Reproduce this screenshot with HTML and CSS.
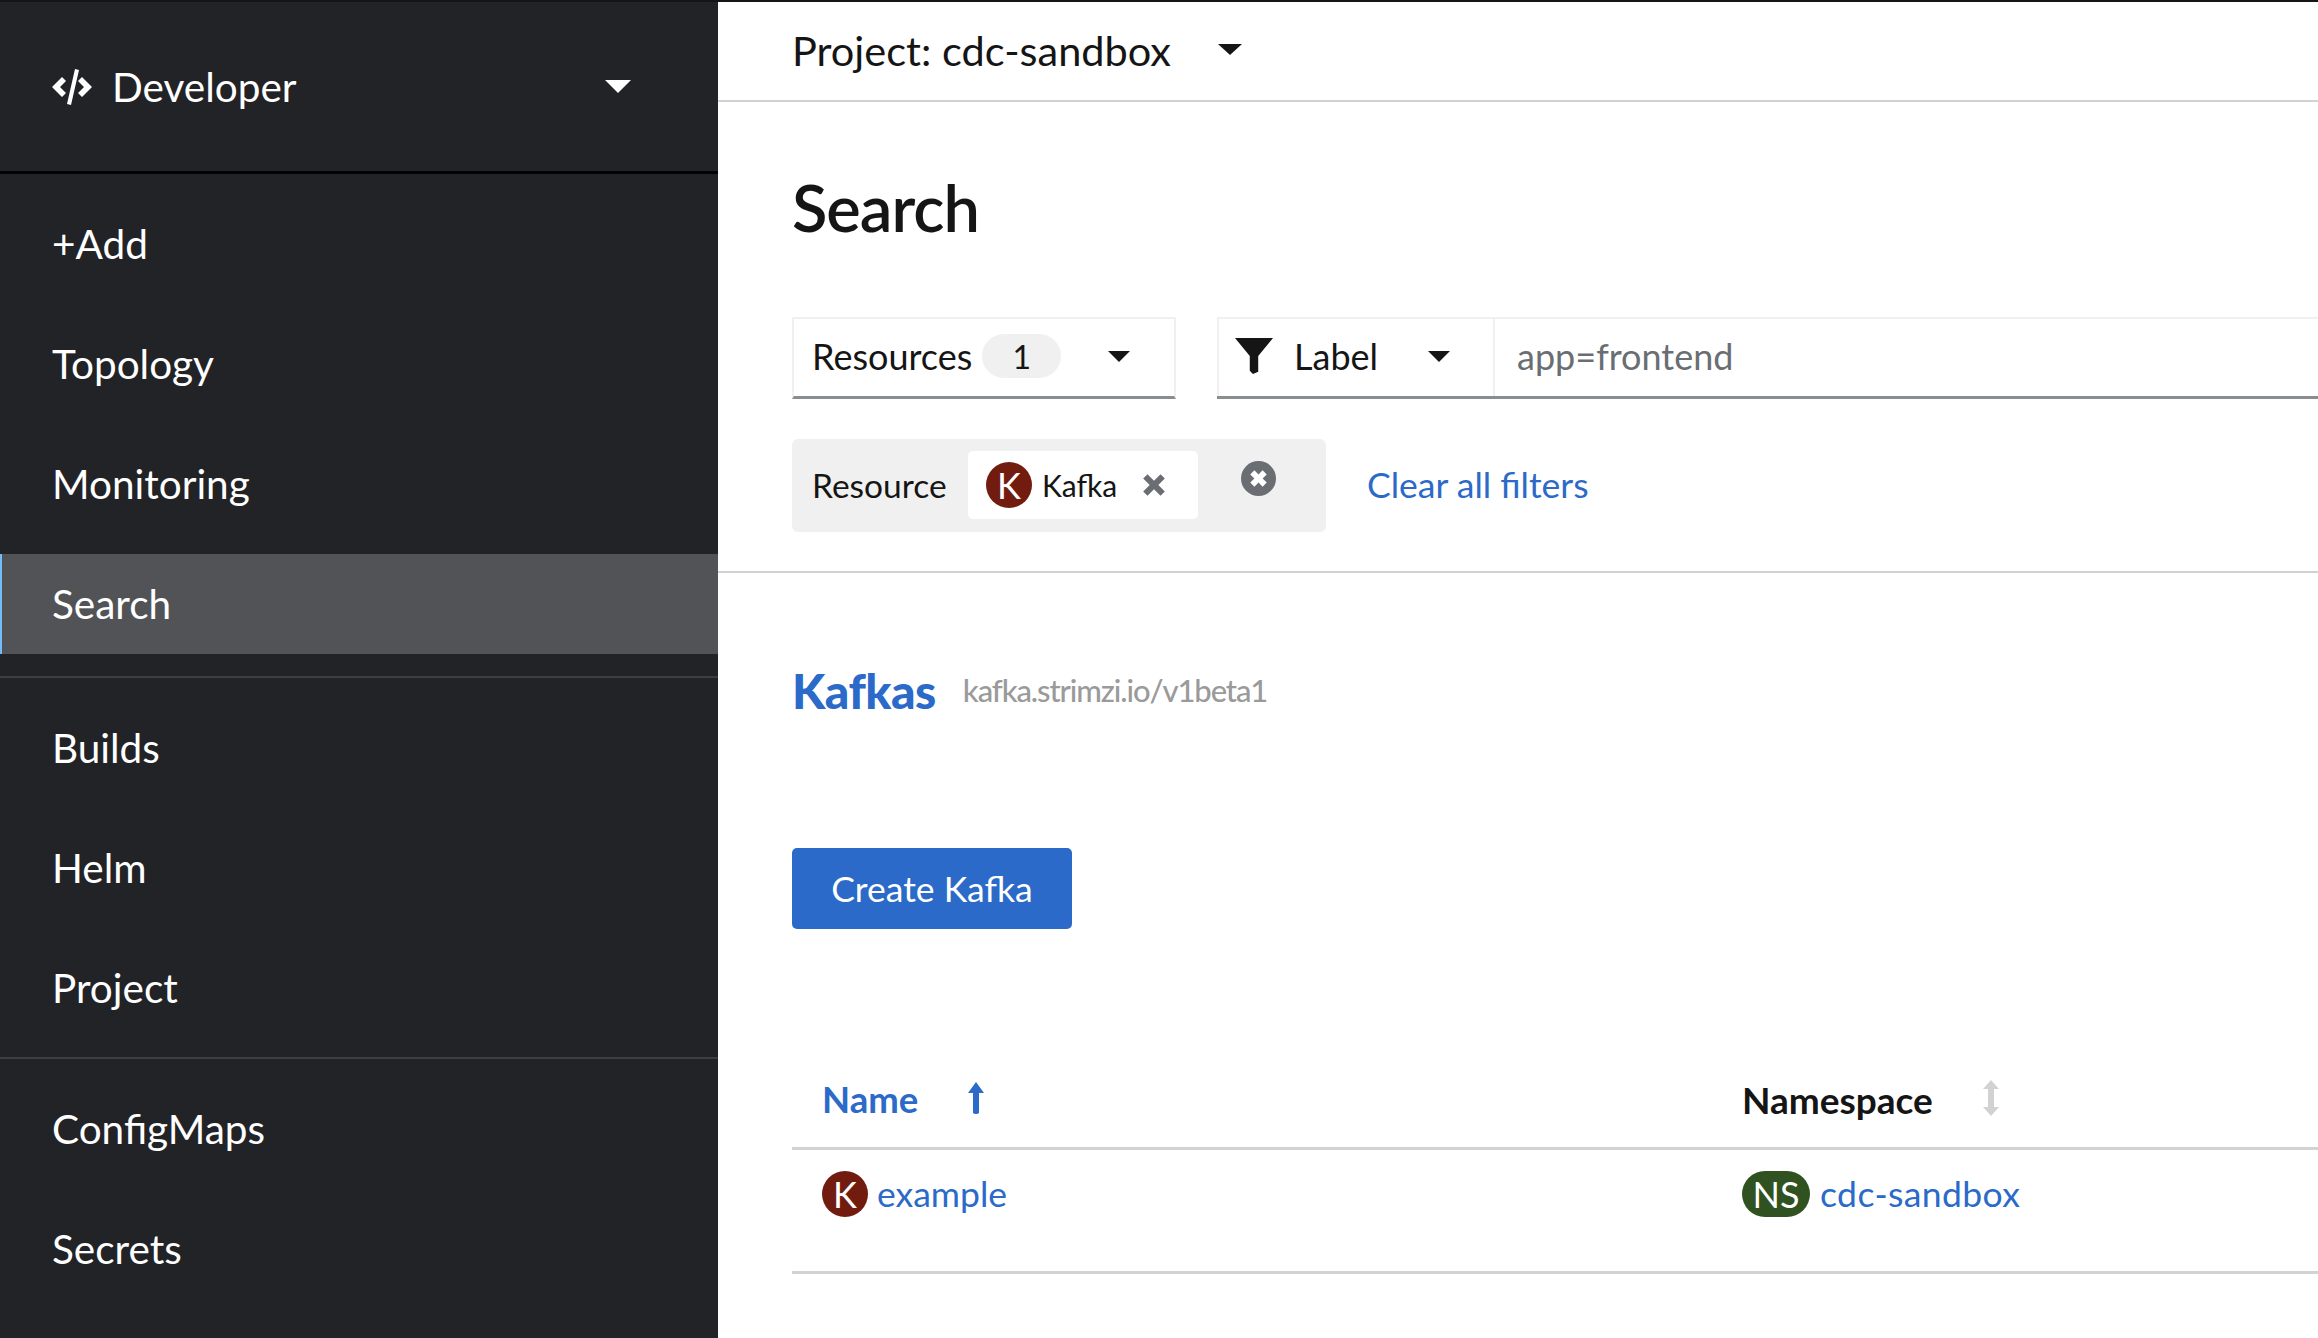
FILE: index.html
```html
<!DOCTYPE html>
<html lang="en">
<head>
<meta charset="utf-8">
<title>Search</title>
<link rel="stylesheet" href="styles.css">
</head>
<body>
<div class="app">
  <aside class="sidebar">
    <div class="perspective">
      <svg class="code-icon" viewBox="0 0 40 36" aria-hidden="true"><path d="M10 8 0 18l10 10 4-4-6-6 6-6zM30 8l10 10-10 10-4-4 6-6-6-6zM23 0l-8 35 4 1 8-35z" fill="#fff"/></svg>
      <span class="perspective-name">Developer</span>
      <span class="caret caret-light"></span>
    </div>
    <nav class="nav">
      <div class="nav-group">
        <a class="nav-item">+Add</a>
        <a class="nav-item">Topology</a>
        <a class="nav-item">Monitoring</a>
        <a class="nav-item active">Search</a>
      </div>
      <div class="nav-group">
        <a class="nav-item">Builds</a>
        <a class="nav-item">Helm</a>
        <a class="nav-item">Project</a>
      </div>
      <div class="nav-group">
        <a class="nav-item">ConfigMaps</a>
        <a class="nav-item">Secrets</a>
      </div>
    </nav>
  </aside>
  <main class="main">
    <div class="project-bar">
      <span>Project: cdc-sandbox</span>
      <span class="caret caret-dark"></span>
    </div>
    <section class="search-head">
      <h1 class="title">Search</h1>
      <div class="toolbar">
        <div class="select resources">
          <span>Resources</span>
          <span class="count">1</span>
          <span class="caret caret-small"></span>
        </div>
        <div class="filter">
          <div class="select label">
            <svg class="funnel" viewBox="0 0 36 34" aria-hidden="true"><path d="M0 0h36L22 17v15l-5 2-3-3V17z" fill="#151515"/></svg>
            <span>Label</span>
            <span class="caret caret-small"></span>
          </div>
          <div class="filter-input">app=frontend</div>
        </div>
      </div>
      <div class="chips-row">
        <div class="chip-group">
          <span class="chip-cat">Resource</span>
          <div class="chip">
            <span class="badge kafka">K</span>
            <span class="chip-text">Kafka</span>
            <svg class="chip-x" viewBox="0 0 24 24" aria-hidden="true"><path d="M2 6l4-4 6 6 6-6 4 4-6 6 6 6-4 4-6-6-6 6-4-4 6-6z" fill="#6a6e73"/></svg>
          </div>
          <svg class="group-close" viewBox="0 0 34 34" aria-hidden="true"><circle cx="17" cy="17" r="17" fill="#6a6e73"/><path d="M9 13l4-4 4 4 4-4 4 4-4 4 4 4-4 4-4-4-4 4-4-4 4-4z" fill="#fff"/></svg>
        </div>
        <a class="clear-link">Clear all filters</a>
      </div>
    </section>
    <section class="results">
      <div class="heading">
        <h2 class="kind">Kafkas</h2>
        <span class="api">kafka.strimzi.io/v1beta1</span>
      </div>
      <button class="create" type="button">Create Kafka</button>
      <div class="table">
        <div class="row head">
          <div class="cell name-cell">
            <span class="th sorted">Name</span>
            <svg class="sort-up" viewBox="0 0 16 32" aria-hidden="true"><path d="M8 0l8 11h-5v20l-2 1H7l-2-1V11H0z" fill="#2b6ac8"/></svg>
          </div>
          <div class="cell">
            <span class="th">Namespace</span>
            <svg class="sort-both" viewBox="0 0 16 36" aria-hidden="true"><path d="M8 0l8 9h-5v18h5l-8 9-8-9h5V9H0z" fill="#d2d2d2"/></svg>
          </div>
        </div>
        <div class="row body">
          <div class="cell name-cell">
            <span class="badge kafka">K</span>
            <a class="link">example</a>
          </div>
          <div class="cell">
            <span class="badge ns">NS</span>
            <a class="link ns-link">cdc-sandbox</a>
          </div>
        </div>
      </div>
    </section>
  </main>
</div>
</body>
</html>
```

FILE: styles.css
```css
* { box-sizing: border-box; }
html, body { margin: 0; height: 100%; overflow: hidden; }
body { font-family: "Lato", "Liberation Sans", sans-serif; color: #151515; background: #fff; }
.app { display: flex; height: 1338px; border-top: 2px solid #151515; }

.sidebar { width: 718px; flex: none; background: #222327; color: #fff; font-size: 40.500px; }
.perspective { height: 172px; display: flex; align-items: center; padding: 0 86px 0 52px; border-bottom: 3px solid #030303; }
.code-icon { width: 40px; height: 36px; margin-right: 20px; }
.perspective-name { flex: 1; }
.caret { display: block; width: 0; height: 0; border-style: solid; border-color: transparent; border-bottom-width: 0; }
.caret-light { border-width: 13px 13px 0; border-top-color: #fff; margin-right: 1px; }
.caret-dark { border-width: 11px 12px 0; border-top-color: #151515; margin-left: 47px; }
.caret-small { border-width: 11px 11px 0; border-top-color: #151515; }

.nav-group { padding: 20px 0 22px; border-bottom: 2px solid #3c3f42; display: flex; flex-direction: column; gap: 20px; }
.nav-group + .nav-group { padding: 20px 0 19px; }
.nav-group:last-child { border-bottom: 0; }
.nav-item { height: 100px; display: flex; align-items: center; padding: 0 0 2px 52px; }
.nav-item.active { background: #525357; border-left: 2px solid #73bcf7; padding-left: 50px; }

.main { flex: 1; min-width: 0; }
.project-bar { height: 100px; display: flex; align-items: center; padding: 0 0 3px 74px; border-bottom: 2px solid #d2d2d2; font-size: 41.500px; }

.search-head { padding: 66px 0 39px 74px; border-bottom: 2px solid #d2d2d2; }
.title { margin: 0 0 71px; font-size: 65px; font-weight: 600; line-height: 78px; letter-spacing: -1px; }
.toolbar { display: flex; gap: 41px; font-size: 36px; }
.select { display: flex; align-items: center; height: 82px; padding-bottom: 3px; background: #fff; }
.resources { width: 384px; padding: 0 44px 3px 18px; border: 2px solid #f0f0f0; border-bottom: 3px solid #8a8d90; }
.resources .caret { margin-left: auto; }
.count { width: 79px; height: 44px; margin-left: 10px; background: #f0f0f0; border-radius: 22px; display: flex; align-items: center; justify-content: center; font-size: 32px; }
.filter { flex: 1; display: flex; height: 82px; border-top: 2px solid #f0f0f0; border-bottom: 3px solid #8a8d90; }
.label { width: 278px; height: auto; padding: 0 43px 3px 16px; border-left: 2px solid #f0f0f0; border-right: 2px solid #f0f0f0; }
.label .caret { margin-left: auto; }
.funnel { width: 38px; height: 36px; margin-right: 21px; }
.filter-input { flex: 1; display: flex; align-items: center; padding: 0 0 3px 22px; color: #6a6e73; }

.chips-row { display: flex; align-items: center; margin-top: 40px; }
.chip-group { width: 534px; height: 93px; display: flex; align-items: center; padding: 0 0 2px 20px; background: #f0f0f0; border-radius: 6px; font-size: 33.500px; }
.chip-cat { width: 156px; }
.chip { width: 230px; height: 68px; display: flex; align-items: center; padding: 0 31px 0 18px; background: #fff; border-radius: 5px; }
.chip .badge { margin-right: 10px; }
.chip-text { font-size: 30px; flex: 1; }
.chip-x { width: 26px; height: 26px; }
.group-close { width: 35px; height: 35px; margin: -13px 0 0 43px; }
.clear-link { margin: -2px 0 0 41px; color: #2b6ac8; font-size: 35.500px; }

.badge { display: inline-flex; align-items: center; justify-content: center; height: 46px; min-width: 46px; border-radius: 23px; color: #fff; font-size: 36px; flex: none; }
.kafka { background: #721c10; }
.ns { background: #2f5220; width: 68px; }

.results { padding: 85px 0 0 74px; }
.heading { display: flex; align-items: center; height: 64px; }
.kind { margin: 0 27px 0 0; color: #2b6ac8; font-size: 48px; font-weight: 900; letter-spacing: -0.500px; }
.api { color: #9a9a9a; font-size: 31px; font-weight: 500; letter-spacing: -1.100px; }
.create { display: block; width: 280px; height: 81px; padding-bottom: 2px; margin-top: 126px; border: 0; border-radius: 5px; background: #2b6ac8; color: #fff; font: inherit; font-size: 35.500px; }

.table { margin-top: 119px; }
.row { display: grid; grid-template-columns: 950px 1fr; border-bottom: 3px solid #d2d2d2; }
.row.head { height: 102px; }
.row.body { height: 124px; }
.cell { display: flex; align-items: center; }
.head .cell { padding-top: 3px; }
.body .cell { margin-bottom: 34px; }
.name-cell { padding-left: 30px; }
.th { font-size: 37px; font-weight: 700; }
.sorted { color: #2b6ac8; font-size: 36.500px; }
.sort-up { width: 16px; height: 32px; margin-left: 50px; margin-top: -2px; }
.sort-both { width: 16px; height: 36px; margin-left: 50px; margin-top: -2px; }
.link { color: #2b6ac8; font-size: 35.500px; margin-left: 9px; }
.ns-link { margin-left: 10px; letter-spacing: 0.400px; }
```
